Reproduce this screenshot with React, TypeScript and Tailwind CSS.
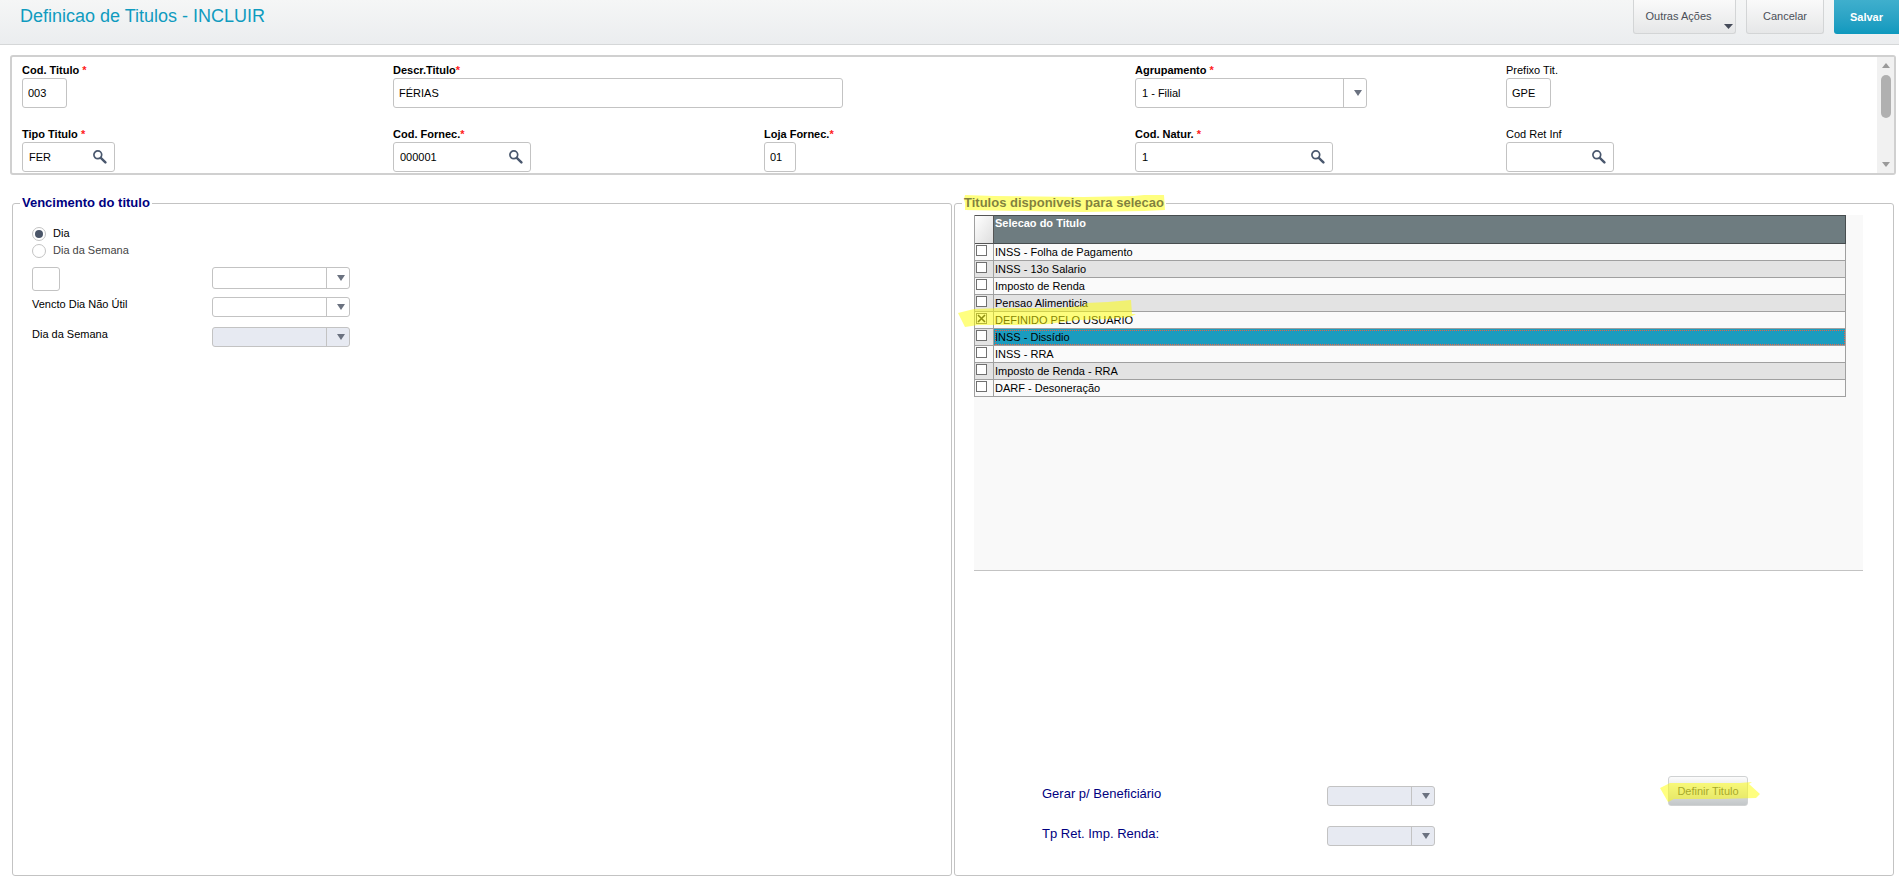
import { useState } from 'react';
import clsx from 'clsx';

const titles = [
  'INSS - Folha de Pagamento',
  'INSS - 13o Salario',
  'Imposto de Renda',
  'Pensao Alimenticia',
  'DEFINIDO PELO USUARIO',
  'INSS - Dissídio',
  'INSS - RRA',
  'Imposto de Renda - RRA',
  'DARF - Desoneração'
];

function SearchIcon() {
  return (
    <svg viewBox="0 0 14 14" className="h-3.5 w-3.5" fill="none" stroke="#4a586e">
      <circle cx="4.8" cy="4.8" r="3.9" strokeWidth="1.7" />
      <path d="M7.8 7.8 L12.4 12.4" strokeWidth="2.4" strokeLinecap="round" />
    </svg>
  );
}

function Field({ id, label, value, width, required, spaced, lookup, className }: {
  id: string;
  label: string;
  value: string;
  width: string;
  required?: boolean;
  spaced?: boolean;
  lookup?: boolean;
  className?: string;
}) {
  return (
    <div className={className}>
      <FieldLabel id={id} label={label} required={required} spaced={spaced} />
      <div className={clsx('flex h-[30px] items-center rounded-[3px] border border-[#c3c3c3] bg-white', width)}>
        <input
          id={id}
          defaultValue={value}
          className={clsx('h-full w-full min-w-0 bg-transparent outline-none', lookup ? 'pl-1.5' : 'pl-[5px]')}
        />
        {lookup && (
          <button type="button" aria-label={`Pesquisar ${label}`} className="mr-[7px] mb-px shrink-0">
            <SearchIcon />
          </button>
        )}
      </div>
    </div>
  );
}

function FieldLabel({ id, label, required, spaced }: { id: string; label: string; required?: boolean; spaced?: boolean }) {
  return (
    <label htmlFor={id} className={clsx('block h-4 leading-4 whitespace-nowrap', required && 'font-bold')}>
      {label}
      {spaced && ' '}
      {required && <span className="text-[#ff2020]">*</span>}
    </label>
  );
}

function Combo({ id, size, options = [''], disabled, label }: {
  id: string;
  size: string;
  options?: string[];
  disabled?: boolean;
  label?: string;
}) {
  return (
    <div className={clsx('relative', size)}>
      <select
        id={id}
        aria-label={label}
        disabled={disabled}
        className="block h-full w-full appearance-none rounded-[3px] border border-[#c3c3c3] bg-white pl-1.5 text-black opacity-100 outline-none disabled:bg-[#e7eaf2]"
      >
        {options.map((option) => (
          <option key={option}>{option}</option>
        ))}
      </select>
      <span className="pointer-events-none absolute inset-y-px right-0 flex w-6 items-center justify-center border-l border-[#c3c3c3] pl-1">
        <svg viewBox="0 0 8 6" className="h-1.5 w-2">
          <path d="M0 0 H8 L4 6 Z" fill="#6b7280" />
        </svg>
      </span>
    </div>
  );
}

export default function App() {
  const [mode, setMode] = useState('dia');
  const [checked, setChecked] = useState([4]);

  const toggle = (index: number) => {
    setChecked(checked.includes(index) ? checked.filter((i) => i !== index) : [...checked, index]);
  };

  return (
    <div className="flex min-h-screen flex-col bg-white font-['Liberation_Sans',Arial,sans-serif] text-[11px] text-black">
      <header className="flex h-[45px] items-start justify-between border-b border-[#d5d7d8] bg-linear-to-b from-[#f5f6f6] to-[#ebedef]">
        <h1 className="pl-5 text-[18px] leading-8 text-[#0f9bbf]">Definicao de Titulos - INCLUIR</h1>
        <div className="flex gap-2.5">
          <button type="button" className="relative h-[34px] w-[103px] rounded-b-[3px] border border-t-0 border-[#d3d5d6] bg-linear-to-b from-[#fafafa] to-[#e6e7e8] pr-3 text-[#4b4f58]">
            Outras Ações
            <svg viewBox="0 0 9 5" className="absolute right-[2px] bottom-[4px] h-[5px] w-[9px]">
              <path d="M0 0 H9 L4.5 5 Z" fill="#454b59" />
            </svg>
          </button>
          <button type="button" className="h-[34px] w-[78px] rounded-b-[3px] border border-t-0 border-[#d3d5d6] bg-linear-to-b from-[#fafafa] to-[#e6e7e8] text-[#4b4f58]">
            Cancelar
          </button>
          <button type="button" className="h-[34px] w-[65px] rounded-bl-[3px] bg-linear-to-b from-[#3fafcd] to-[#0d99be] font-bold text-white">
            Salvar
          </button>
        </div>
      </header>

      {/* Dados do titulo */}
      <section className="mt-2.5 mr-[3px] ml-2.5 flex h-[120px] overflow-hidden rounded-[3px] border-2 border-[#d0d0d0]">
        <div className="grid flex-1 grid-cols-5 content-start gap-y-[18px] pt-[5px] pl-2.5">
          <Field id="cod" label="Cod. Titulo" value="003" width="w-[45px]" required spaced />
          <Field id="descr" label="Descr.Titulo" value="FÉRIAS" width="w-[450px]" required className="col-span-2" />
          <div>
            <FieldLabel id="agrup" label="Agrupamento" required spaced />
            <Combo id="agrup" size="h-[30px] w-[232px]" options={['1 - Filial']} />
          </div>
          <Field id="prefixo" label="Prefixo Tit." value="GPE" width="w-[45px]" />
          <Field id="tipo" label="Tipo Titulo" value="FER" width="w-[93px]" required spaced lookup />
          <Field id="fornec" label="Cod. Fornec." value="000001" width="w-[138px]" required lookup />
          <Field id="loja" label="Loja Fornec." value="01" width="w-8" required />
          <Field id="natur" label="Cod. Natur." value="1" width="w-[198px]" required spaced lookup />
          <Field id="ret" label="Cod Ret Inf" value="" width="w-[108px]" lookup />
        </div>
        <div className="flex w-[17px] flex-col items-center justify-between bg-[#f1f1f1] py-1.5">
          <div className="flex flex-col items-center gap-[7px]">
            <svg viewBox="0 0 8 5" className="h-[5px] w-2">
              <path d="M0 5 H8 L4 0 Z" fill="#9a9a9a" />
            </svg>
            <div className="h-[43px] w-2.5 rounded-full bg-[#b0b0b0]" />
          </div>
          <svg viewBox="0 0 8 5" className="h-[5px] w-2">
            <path d="M0 0 H8 L4 5 Z" fill="#9a9a9a" />
          </svg>
        </div>
      </section>

      <main className="mt-[19px] grid flex-1 grid-cols-2 gap-0.5 pr-[5px] pl-3">
        <fieldset className="min-w-0 rounded-[3px] border border-[#c3c3c3]">
          <legend className="ml-[7px] px-0.5 text-[13px] leading-[18px] font-bold text-[#000080]">Vencimento do titulo</legend>
          <div className="pt-[13px] pl-[19px]">
            <div className="flex flex-col">
              <label className="flex h-[17px] items-center gap-[7px]">
                <input
                  type="radio"
                  name="mode"
                  checked={mode === 'dia'}
                  onChange={() => setMode('dia')}
                  className="h-3.5 w-3.5 appearance-none rounded-full border border-[#c3c3c3] bg-white checked:bg-[#4a5568] checked:bg-clip-content checked:p-[2px]"
                />
                Dia
              </label>
              <label className="flex h-[17px] items-center gap-[7px] text-[#444]">
                <input
                  type="radio"
                  name="mode"
                  checked={mode === 'semana'}
                  onChange={() => setMode('semana')}
                  className="h-3.5 w-3.5 appearance-none rounded-full border border-[#c3c3c3] bg-white checked:bg-[#4a5568] checked:bg-clip-content checked:p-[2px]"
                />
                Dia da Semana
              </label>
            </div>
            <div className="mt-2 grid grid-cols-[180px_138px] gap-y-[6px]">
              <input aria-label="Dia" className="h-6 w-7 rounded-[3px] border border-[#c3c3c3] bg-white px-1 outline-none" />
              <Combo id="periodo" label="Periodo" size="h-[22px]" />
              <label htmlFor="vencto" className="h-6 leading-[14px]">Vencto Dia Não Útil</label>
              <Combo id="vencto" size="h-5" />
              <label htmlFor="semana" className="h-6 leading-[14px]">Dia da Semana</label>
              <Combo id="semana" size="h-5" disabled />
            </div>
          </div>
        </fieldset>

        <fieldset className="min-w-0 rounded-[3px] border border-[#c3c3c3]">
          <legend className="relative ml-[7px] px-0.5 text-[13px] leading-[18px] font-bold text-[#000080]">
            Titulos disponiveis para selecao
            <svg viewBox="0 0 202 18" preserveAspectRatio="none" className="pointer-events-none absolute top-px left-0.5 h-[18px] w-[202px]">
              <path d="M1 0 L30 1 L120 2 L170 1 L180 0 L200 0 L201 15 L180 16 L120 17 L60 16 L1 15 L1 8 L0 4 Z" fill="#ffff00" fillOpacity="0.5" />
            </svg>
          </legend>
          <div className="flex h-full flex-col">
            <div className="mt-[3px] mr-[30px] ml-[19px] h-[356px] border-b border-[#c3c3c3] bg-[#f9f9f9] pr-[17px]">
              <table className="w-full table-fixed border-separate border-spacing-0 border-l border-[#a0a0a0]">
                <thead>
                  <tr className="h-[29px]">
                    <th className="w-[19px] border-t border-r border-b border-[#555] bg-linear-to-br from-white to-[#dedede]" />
                    <th className="border-t border-r border-b border-[#474d4f] bg-[#6e7c80] pl-px text-left align-top leading-[14px] text-white">
                      Selecao do Titulo
                    </th>
                  </tr>
                </thead>
                <tbody>
                  {titles.map((title, index) => (
                    <tr key={title} className="h-[17px] bg-[#fafafa] even:bg-[#e3e3e3]">
                      <td className="relative border-r border-b border-[#a0a0a0] p-0">
                        <input
                          id={`title-${index}`}
                          type="checkbox"
                          checked={checked.includes(index)}
                          onChange={() => toggle(index)}
                          className="mb-1 ml-px block h-[11px] w-[11px] appearance-none border border-[#707070] bg-white"
                        />
                        {checked.includes(index) && (
                          <svg viewBox="0 0 11 11" className="pointer-events-none absolute top-px left-px h-[11px] w-[11px]" stroke="#222" strokeWidth="1.6">
                            <path d="M2 2 L9 9 M9 2 L2 9" />
                          </svg>
                        )}
                        {title === 'DEFINIDO PELO USUARIO' && (
                          <svg viewBox="0 0 178 28" className="pointer-events-none absolute -top-3 -left-[17px] z-10 h-7 w-[178px]">
                            <path d="M0 13 L16 9 L45 8 L100 8 L126 6 L128 3 L150 2 L173 0 L174 14 L178 14 L172 17 L150 19 L120 20 L90 24 L60 25 L20 25 L7 27 Z" fill="#ffff00" fillOpacity="0.5" />
                          </svg>
                        )}
                      </td>
                      <td
                        className={clsx(
                          'border-r border-b border-[#a0a0a0] p-0',
                          index === 5 && 'bg-[#1b9cbf] outline-1 -outline-offset-2 outline-dotted outline-[#e2654a]'
                        )}
                      >
                        <label htmlFor={`title-${index}`} className="block pl-px leading-4">{title}</label>
                      </td>
                    </tr>
                  ))}
                </tbody>
              </table>
            </div>

            <div className="mt-auto mb-[29px] flex items-start pl-[87px]">
              <div className="grid grid-cols-[285px_108px] gap-y-5 pt-2.5 text-[13px] text-[#000080]">
                <label htmlFor="gerar" className="leading-4">Gerar p/ Beneficiário</label>
                <Combo id="gerar" size="h-5" disabled />
                <label htmlFor="tpret" className="leading-4">Tp Ret. Imp. Renda:</label>
                <Combo id="tpret" size="h-5" disabled />
              </div>
              <button type="button" className="relative mr-[145px] ml-auto h-[30px] w-20 rounded-[3px] border border-[#d0d2d3] bg-linear-to-b from-[#fcfcfc] to-[#c3c7c9] text-[#4b4f58]">
                Definir Titulo
                <svg viewBox="0 0 100 22" className="pointer-events-none absolute top-[5px] -left-[9px] h-[22px] w-[100px]">
                  <path d="M0 6 L10 1 L80 1 L92 0 L89 2 L100 12 L96 16 L60 17 L14 17 L8 20 Z" fill="#ffff00" fillOpacity="0.5" />
                </svg>
              </button>
            </div>
          </div>
        </fieldset>
      </main>
    </div>
  );
}
